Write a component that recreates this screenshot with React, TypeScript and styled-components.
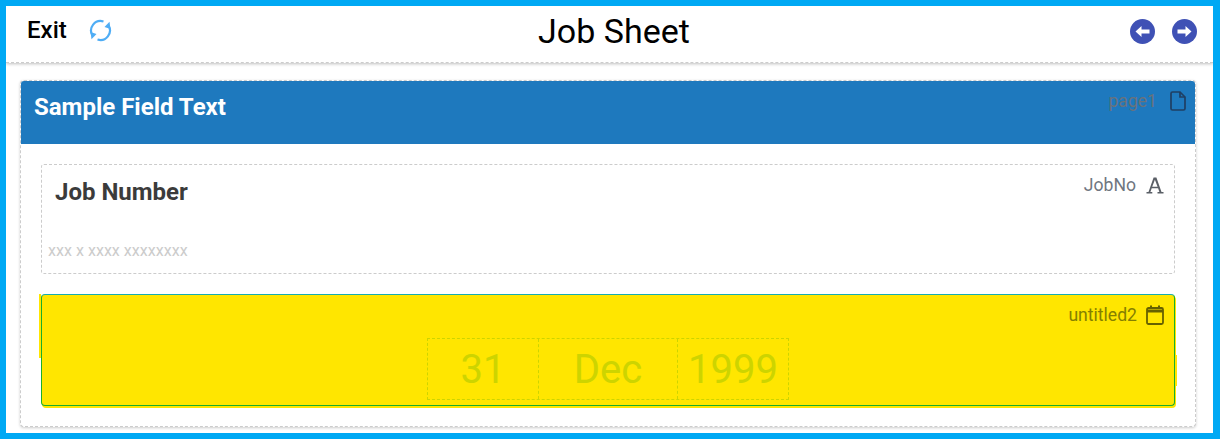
import React from "react";
import styled, { createGlobalStyle } from "styled-components";

const Global = createGlobalStyle`
  html, body { margin: 0; padding: 0; }
  body { font-family: Roboto, "Liberation Sans", sans-serif; }
  * { box-sizing: border-box; }
`;

const Frame = styled.div`
  width: 1220px;
  height: 439px;
  border: 6px solid #00a9f4;
  border-right-width: 7px;
  background: #fff;
  display: flex;
  flex-direction: column;
  overflow: hidden;
`;

const Header = styled.header`
  height: 57px;
  flex: none;
  display: grid;
  grid-template-columns: 1fr auto 1fr;
  align-items: center;
  padding: 0 16px 6px 21px;
  background: #fff;
  border-bottom: 1px dashed #ccc;
  box-shadow: 0 1px 3px rgba(0, 0, 0, 0.25);
`;

const HeaderLeft = styled.div`
  display: flex;
  align-items: center;
  gap: 22px;
`;

const ExitLabel = styled.span`
  margin-bottom: 3px;
  font-size: 24px;
  font-weight: 500;
  color: #000;
`;

const Title = styled.h1`
  margin: 0 0 0 4px;
  font-size: 34px;
  font-weight: 400;
  color: #000;
  line-height: 50px;
`;

const HeaderRight = styled.div`
  display: flex;
  justify-content: flex-end;
  gap: 17px;
`;

const Main = styled.main`
  flex: 1;
  min-height: 0;
  padding: 17px 17px 4px 14px;
`;

const Card = styled.section`
  height: 347px;
  border: 1px dashed #ccc;
  border-radius: 4px;
  background: #fff;
  box-shadow: 0 1px 3px rgba(0, 0, 0, 0.2);
  display: flex;
  flex-direction: column;
`;

const CardHeader = styled.div`
  height: 63px;
  flex: none;
  background: #1e79be;
  border-radius: 3px 3px 0 0;
  display: flex;
  justify-content: space-between;
  padding: 12px 9px 0 13px;
`;

const CardTitle = styled.h2`
  margin: 0;
  font-size: 24px;
  line-height: 28px;
  font-weight: 700;
  color: #fff;
`;

const Tag = styled.div<{ $color: string; $gap: number }>`
  display: flex;
  align-items: center;
  gap: ${(p) => p.$gap}px;
  height: 24px;
  font-size: 17.600px;
  color: ${(p) => p.$color};
`;

const PageTag = styled(Tag)`
  margin-top: -4px;
`;

const FieldList = styled.div`
  display: flex;
  flex-direction: column;
  gap: 20px;
  padding: 20px 20px 0 20px;
`;

const TextField = styled.div`
  height: 110px;
  border: 1px dashed #ccc;
  border-radius: 3px;
  display: flex;
  flex-direction: column;
  padding: 8px 10px 0 13px;
`;

const FieldTop = styled.div`
  display: flex;
  justify-content: space-between;
  align-items: flex-start;
`;

const FieldLabel = styled.h3`
  margin: 0;
  padding-top: 5px;
  font-size: 24px;
  line-height: 28px;
  font-weight: 700;
  color: #3b3b3b;
`;

const Placeholder = styled.div`
  margin: 35px 0 0 -7px;
  font-size: 16.100px;
  line-height: 20px;
  color: #ccc;
`;

const DateField = styled.div`
  position: relative;
  height: 112px;
  border: 1px solid #1aae2c;
  border-top-color: #17adb0;
  border-radius: 4px;
  background: #ffe600;
  box-shadow: 1px 2px 0 #ffe600;
  display: flex;
  flex-direction: column;
  padding: 8px 10px 0 13px;

  &::before {
    content: "";
    position: absolute;
    left: -3px;
    top: -1px;
    width: 2px;
    height: 64px;
    background: #ffe600;
  }

  &::after {
    content: "";
    position: absolute;
    right: -3px;
    top: 60px;
    width: 2px;
    height: 31px;
    background: #ffe600;
  }
`;

const DateTop = styled.div`
  display: flex;
  justify-content: flex-end;
`;

const DateRow = styled.div`
  align-self: center;
  display: flex;
  width: 362px;
  height: 62px;
  margin: 11px 0 0 -3px;
  border: 1px dashed #cdd400;
`;

const DatePart = styled.div<{ $width: number; $divider?: boolean }>`
  width: ${(p) => p.$width}px;
  display: flex;
  align-items: center;
  justify-content: center;
  font-size: 40px;
  color: #cdd400;
  border-left: ${(p) => (p.$divider ? "1px dashed #cdd400" : "none")};
`;

const RefreshIcon = () => (
  <svg width="24" height="24" viewBox="0 0 24 24" fill="none">
    <path d="M3.500 16.500A9.500 9.500 0 0 1 14.500 2.500" stroke="#4fadf5" strokeWidth="2.200" />
    <path d="M19.500 6.500A9.500 9.500 0 0 1 8.500 20.500" stroke="#4fadf5" strokeWidth="2.200" />
    <path d="M15.500 8L20.500 2.800L21.500 10Z" fill="#4fadf5" />
    <path d="M7.500 15L2.500 20.200L1.500 13Z" fill="#4fadf5" />
  </svg>
);

const ArrowCircle = ({ dir }: { dir: "left" | "right" }) => (
  <svg width="25" height="25" viewBox="0 0 25 25">
    <circle cx="12.500" cy="12.500" r="12.500" fill="#3f51b5" />
    <g transform={dir === "right" ? "rotate(180 12.500 12.500)" : undefined}>
      <path d="M5.500 12.500L11.500 7V10.500H19.500V14.500H11.500V18Z" fill="#fff" />
    </g>
  </svg>
);

const FileIcon = () => (
  <svg width="16" height="20" viewBox="0 0 16 20" fill="none" stroke="#1f3f63" strokeWidth="1.700">
    <path d="M2.500 1H10L15 6V17.500A1.500 1.500 0 0 1 13.500 19H2.500A1.500 1.500 0 0 1 1 17.500V2.500A1.500 1.500 0 0 1 2.500 1Z" />
    <path d="M10 1V6H15" />
  </svg>
);

const SerifA = () => (
  <svg width="18" height="19" viewBox="0 0 18 18" fill="#5a5f66">
    <path d="M7.600 1H10.400L15.500 15.500H17.500V17H11.500V15.500H13.400L12.100 11.700H5.700L4.400 15.500H6.300V17H.5V15.500H2.500ZM8.900 3.200L6.200 10.200H11.600Z" />
  </svg>
);

const CalendarIcon = () => (
  <svg width="18" height="20" viewBox="0 0 18 20" fill="none">
    <rect x="1" y="3" width="16" height="16" rx="1.500" stroke="#666100" strokeWidth="1.800" />
    <path d="M1 4.500H17V7.500H1Z" fill="#666100" />
    <path d="M5 .5V4M13 .5V4" stroke="#666100" strokeWidth="2" />
  </svg>
);

export default function App() {
  return (
    <>
      <Global />
      <Frame>
        <Header>
          <HeaderLeft>
            <ExitLabel>Exit</ExitLabel>
            <RefreshIcon />
          </HeaderLeft>
          <Title>Job Sheet</Title>
          <HeaderRight>
            <ArrowCircle dir="left" />
            <ArrowCircle dir="right" />
          </HeaderRight>
        </Header>
        <Main>
          <Card>
            <CardHeader>
              <CardTitle>Sample Field Text</CardTitle>
              <PageTag $color="#69727c" $gap={13}>
                page1
                <FileIcon />
              </PageTag>
            </CardHeader>
            <FieldList>
              <TextField>
                <FieldTop>
                  <FieldLabel>Job Number</FieldLabel>
                  <Tag $color="#6f7680" $gap={10}>
                    JobNo
                    <SerifA />
                  </Tag>
                </FieldTop>
                <Placeholder>xxx x xxxx xxxxxxxx</Placeholder>
              </TextField>
              <DateField>
                <DateTop>
                  <Tag $color="#857f00" $gap={9}>
                    untitled2
                    <CalendarIcon />
                  </Tag>
                </DateTop>
                <DateRow>
                  <DatePart $width={110}>31</DatePart>
                  <DatePart $width={139} $divider>Dec</DatePart>
                  <DatePart $width={111} $divider>1999</DatePart>
                </DateRow>
              </DateField>
            </FieldList>
          </Card>
        </Main>
      </Frame>
    </>
  );
}
